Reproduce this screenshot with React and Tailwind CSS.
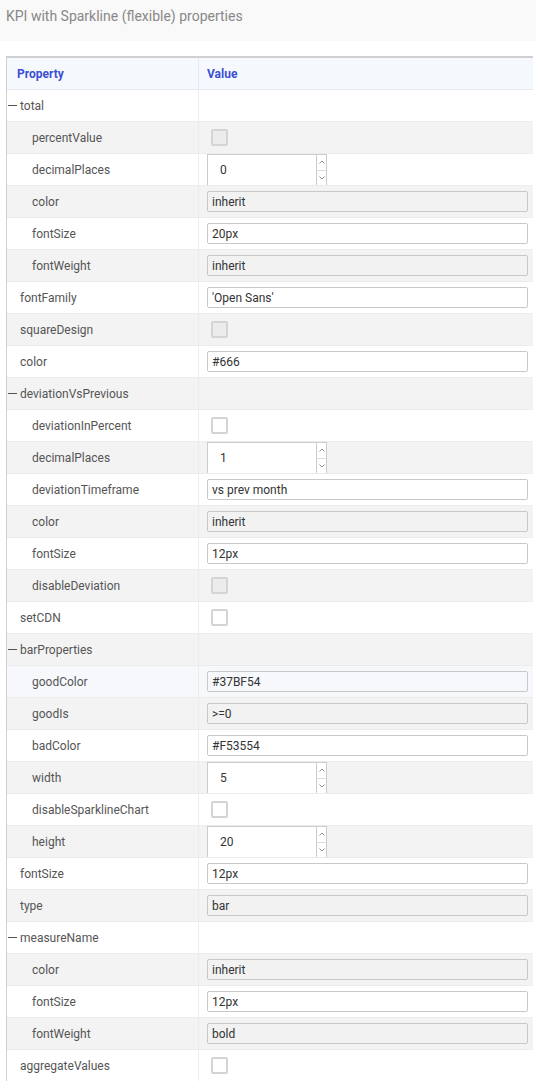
import React from "react";

const rows = [
  { name: "total", level: 0, group: true },
  { name: "percentValue", level: 1, type: "check", disabled: true },
  { name: "decimalPlaces", level: 1, type: "number", value: "0" },
  { name: "color", level: 1, type: "text", value: "inherit", disabled: true },
  { name: "fontSize", level: 1, type: "text", value: "20px" },
  { name: "fontWeight", level: 1, type: "text", value: "inherit", disabled: true },
  { name: "fontFamily", level: 0, type: "text", value: "'Open Sans'" },
  { name: "squareDesign", level: 0, type: "check", disabled: true },
  { name: "color", level: 0, type: "text", value: "#666" },
  { name: "deviationVsPrevious", level: 0, group: true },
  { name: "deviationInPercent", level: 1, type: "check" },
  { name: "decimalPlaces", level: 1, type: "number", value: "1" },
  { name: "deviationTimeframe", level: 1, type: "text", value: "vs prev month" },
  { name: "color", level: 1, type: "text", value: "inherit", disabled: true },
  { name: "fontSize", level: 1, type: "text", value: "12px" },
  { name: "disableDeviation", level: 1, type: "check", disabled: true },
  { name: "setCDN", level: 0, type: "check" },
  { name: "barProperties", level: 0, group: true },
  { name: "goodColor", level: 1, type: "text", value: "#37BF54", hover: true },
  { name: "goodIs", level: 1, type: "text", value: ">=0", disabled: true },
  { name: "badColor", level: 1, type: "text", value: "#F53554" },
  { name: "width", level: 1, type: "number", value: "5" },
  { name: "disableSparklineChart", level: 1, type: "check" },
  { name: "height", level: 1, type: "number", value: "20" },
  { name: "fontSize", level: 0, type: "text", value: "12px" },
  { name: "type", level: 0, type: "text", value: "bar", disabled: true },
  { name: "measureName", level: 0, group: true },
  { name: "color", level: 1, type: "text", value: "inherit", disabled: true },
  { name: "fontSize", level: 1, type: "text", value: "12px" },
  { name: "fontWeight", level: 1, type: "text", value: "bold", disabled: true },
  { name: "aggregateValues", level: 0, type: "check" },
];

function Spinner() {
  return (
    <div className="flex flex-col w-[10px] border-l border-[#ccc] text-[#8a94a6]">
      <div className="flex-1 flex items-center justify-center border-b border-[#ddd]">
        <svg width="6" height="4" viewBox="0 0 6 4">
          <path d="M0.5 3.5 L3 1 L5.5 3.5" fill="none" stroke="currentColor" strokeWidth="1" />
        </svg>
      </div>
      <div className="flex-1 flex items-center justify-center">
        <svg width="6" height="4" viewBox="0 0 6 4">
          <path d="M0.5 0.5 L3 3 L5.5 0.5" fill="none" stroke="currentColor" strokeWidth="1" />
        </svg>
      </div>
    </div>
  );
}

function ValueCell({ row }) {
  if (row.group) return null;
  if (row.type === "check") {
    return (
      <div
        className={
          "ml-[4px] w-[17px] h-[17px] rounded-[2px] border-2 border-[#d4d4d4] " +
          (row.disabled ? "bg-[#ececec]" : "bg-white")
        }
      />
    );
  }
  if (row.type === "number") {
    return (
      <div className="self-start flex w-[120px] h-[31px] border border-b-0 border-[#ccc] bg-white">
        <div className="flex-1 pl-[12px] flex items-center text-[12px] text-[#333]">{row.value}</div>
        <Spinner />
      </div>
    );
  }
  return (
    <div
      className={
        "flex-1 h-[21px] flex items-center px-[4px] border border-[#c8c8c8] rounded-[2px] text-[12px] text-[#333] " +
        (row.disabled ? "bg-[#f2f2f2]" : row.hover ? "bg-[#f6f8fc]" : "bg-white")
      }
    >
      {row.value}
    </div>
  );
}

export default function App() {
  return (
    <div className="w-[536px] min-h-[1081px] bg-white text-[#555]" style={{ fontFamily: "Roboto, 'Liberation Sans', sans-serif" }}>
      <div className="h-[41px] bg-[#f9f9f9] pl-[6px] pt-[6px] text-[14px] text-[#888]">
        KPI with Sparkline (flexible) properties
      </div>
      <div className="mt-[15px] ml-[6px] w-[527px] border-t-2 border-l border-[#d0d0d0]">
        <div className="flex h-[32px] bg-[#f5f9fd] border-b border-[#e6eaf0] text-[12px] font-bold text-[#3d4fd2]">
          <div className="w-[192px] pl-[10px] flex items-center border-r border-[#e6eaf0]">Property</div>
          <div className="flex-1 pl-[8px] flex items-center">Value</div>
        </div>
        {rows.map((row, i) => (
          <div
            key={i}
            className={
              "flex h-[32px] border-b border-[#ececec] text-[12px] " +
              (row.hover ? "bg-[#f6f8fc]" : i % 2 === 1 ? "bg-[#f3f3f3]" : "bg-white")
            }
          >
            <div
              className={
                "w-[192px] flex items-center border-r border-[#ececec] text-[#555] " +
                (row.group ? "pl-[1px]" : row.level === 1 ? "pl-[25px]" : "pl-[13px]")
              }
            >
              {row.group && <span className="inline-block w-[9px] h-[1px] bg-[#555] mr-[3px]" />}
              {row.name}
            </div>
            <div className="flex-1 flex items-center pl-[8px] pr-[5px]">
              <ValueCell row={row} />
            </div>
          </div>
        ))}
      </div>
    </div>
  );
}
